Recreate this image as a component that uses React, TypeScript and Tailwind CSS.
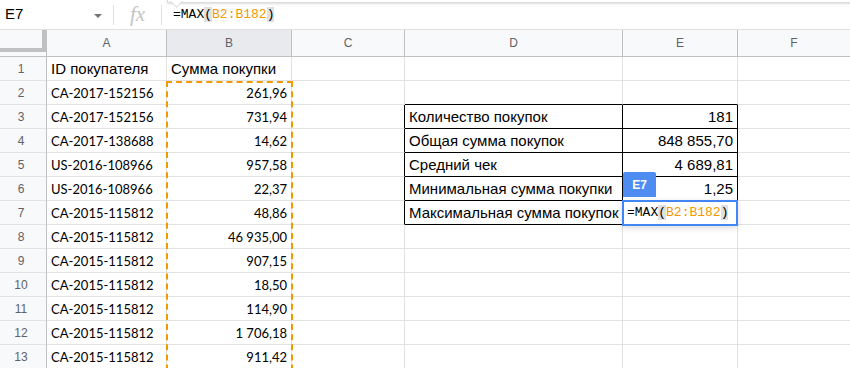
import React from 'react';

const colA = [
  'ID покупателя',
  'CA-2017-152156',
  'CA-2017-152156',
  'CA-2017-138688',
  'US-2016-108966',
  'US-2016-108966',
  'CA-2015-115812',
  'CA-2015-115812',
  'CA-2015-115812',
  'CA-2015-115812',
  'CA-2015-115812',
  'CA-2015-115812',
  'CA-2015-115812',
];

const colB = [
  'Сумма покупки',
  '261,96',
  '731,94',
  '14,62',
  '957,58',
  '22,37',
  '48,86',
  '46 935,00',
  '907,15',
  '18,50',
  '114,90',
  '1 706,18',
  '911,42',
];

const stats: Record<number, [string, string]> = {
  3: ['Количество покупок', '181'],
  4: ['Общая сумма покупок', '848 855,70'],
  5: ['Средний чек', '4 689,81'],
  6: ['Минимальная сумма покупки', '1,25'],
  7: ['Максимальная сумма покупок', ''],
};

const sheetFont = "font-['Lato','Liberation_Sans',sans-serif]";
const arial = "font-['Liberation_Sans',Arial,sans-serif]";

function FormulaText() {
  return (
    <span className="font-['Liberation_Mono',monospace] text-[13px] text-black whitespace-nowrap">
      =MAX<span className="bg-[#e0e0e0]">(</span>
      <span className="text-[#f29900]">B2:B182</span>
      <span className="bg-[#e0e0e0]">)</span>
    </span>
  );
}

function SheetRow({ n }: { n: number }) {
  const inTable = n >= 3 && n <= 7;
  const aboveTable = n === 2;
  const header = n === 1;
  const stat = stats[n];

  return (
    <div className="flex h-6">
      <div className="w-[47px] shrink-0 bg-[#f8f9fa] border-r border-b border-r-[#c0c0c0] border-b-[#e2e2e2] flex items-center justify-center pr-1 text-[12px] text-[#5f6368] font-['Liberation_Sans',Arial,sans-serif]">
        {n}
      </div>
      <div
        className={`w-[120px] shrink-0 border-r border-b border-[#e2e2e2] flex items-end pl-1 pb-[2px] overflow-hidden whitespace-nowrap text-black ${
          header ? `${arial} text-[15px] leading-[18px]` : `${sheetFont} text-[13px] leading-[17px]`
        }`}
      >
        {colA[n - 1]}
      </div>
      <div
        className={`w-[125px] shrink-0 border-r border-b border-[#e2e2e2] flex items-end pb-[2px] overflow-hidden whitespace-nowrap text-black ${
          header
            ? `${arial} text-[15px] leading-[18px] pl-1`
            : `${sheetFont} text-[13px] leading-[17px] justify-end pr-1`
        }`}
      >
        {colB[n - 1]}
      </div>
      <div
        className={`w-[113px] shrink-0 border-r border-b border-b-[#e2e2e2] ${
          inTable ? 'border-r-black' : 'border-r-[#e2e2e2]'
        }`}
      />
      <div
        className={`w-[218px] shrink-0 border-r border-b flex items-end pl-1 pb-[2px] overflow-hidden whitespace-nowrap text-black ${arial} text-[15px] leading-[18px] ${
          inTable ? 'border-black' : aboveTable ? 'border-r-[#e2e2e2] border-b-black' : 'border-[#e2e2e2]'
        }`}
      >
        {stat ? stat[0] : ''}
      </div>
      <div
        className={`w-[115px] shrink-0 border-r border-b flex items-end justify-end pr-1 pb-[2px] whitespace-nowrap text-black ${arial} text-[15px] leading-[18px] ${
          inTable ? 'border-black' : aboveTable ? 'border-r-[#e2e2e2] border-b-black' : 'border-[#e2e2e2]'
        }`}
      >
        {stat ? stat[1] : ''}
      </div>
      <div className="flex-1 border-b border-[#e2e2e2]" />
    </div>
  );
}

export default function App() {
  const rows = Array.from({ length: 13 }, (_, i) => i + 1);

  return (
    <div className="relative w-[850px] h-[368px] overflow-hidden bg-white">
      {/* formula bar */}
      <div className="flex items-center h-[30px] border-b border-[#e0e0e0] bg-white">
        <div className="w-[113px] shrink-0 flex items-center justify-between pl-[5px] pr-[11px]">
          <span className={`${arial} text-[15px] text-black`}>E7</span>
          <svg width="8" height="4" viewBox="0 0 8 4" className="mt-[2px]">
            <polygon points="0,0 8,0 4,4" fill="#757575" />
          </svg>
        </div>
        <div className="w-px h-5 bg-[#e0e0e0]" />
        <div className="w-[47px] shrink-0 flex items-center justify-center">
          <span className="font-['Liberation_Serif',serif] italic text-[21px] text-[#c4c4c4] leading-none">fx</span>
        </div>
        <div className="w-px h-5 bg-[#e0e0e0]" />
        <div className="pl-[11px] flex items-center">
          <FormulaText />
        </div>
      </div>

      {/* column headers */}
      <div className="flex h-[27px] border-b border-[#c0c0c0] bg-[#f8f9fa] text-[12px] text-[#5f6368] font-['Liberation_Sans',Arial,sans-serif]">
        <div className="w-[47px] shrink-0 border-r border-[#c0c0c0]">
          <div className="h-[22px] w-[46px] border-r-4 border-b-4 border-[#c0c0c0]" />
        </div>
        <div className="w-[120px] shrink-0 border-r border-[#c0c0c0] flex items-center justify-center">A</div>
        <div className="w-[125px] shrink-0 border-r border-[#c0c0c0] bg-[#e8eaed] flex items-center justify-center">B</div>
        <div className="w-[113px] shrink-0 border-r border-[#c0c0c0] flex items-center justify-center">C</div>
        <div className="w-[218px] shrink-0 border-r border-[#c0c0c0] flex items-center justify-center">D</div>
        <div className="w-[115px] shrink-0 border-r border-[#c0c0c0] flex items-center justify-center">E</div>
        <div className="flex-1 flex items-center justify-center">F</div>
      </div>

      {/* rows */}
      <div>
        {rows.map((n) => (
          <SheetRow key={n} n={n} />
        ))}
      </div>

      {/* tooltip edge above formula */}
      <div className="absolute left-[167px] top-[-10px] right-[-10px] h-[13px] bg-white border border-[#dadce0] shadow-sm" />
      <div className="absolute left-[172px] top-[-3px] w-[9px] h-[9px] rotate-45 bg-white border-r border-b border-[#dadce0]" />

      {/* copy range marquee B2:B182 */}
      <div className="absolute left-[166px] top-[81px] w-[127px] h-[320px] border-2 border-dashed border-[#f29900]" />

      {/* cell editor E7 */}
      <div className="absolute left-[622px] top-[200px] w-[116px] h-[26px] bg-white border-2 border-[#4285f4] shadow-[0_2px_6px_rgba(0,0,0,0.15)] flex items-center pl-[3px]">
        <FormulaText />
      </div>
      <div className="absolute left-[623px] top-[172px] w-[33px] h-[25px] bg-[#4e8cf2] rounded-t-[2px] flex items-center justify-center text-white text-[12px] font-bold font-['Liberation_Sans',Arial,sans-serif]">
        E7
      </div>
    </div>
  );
}
